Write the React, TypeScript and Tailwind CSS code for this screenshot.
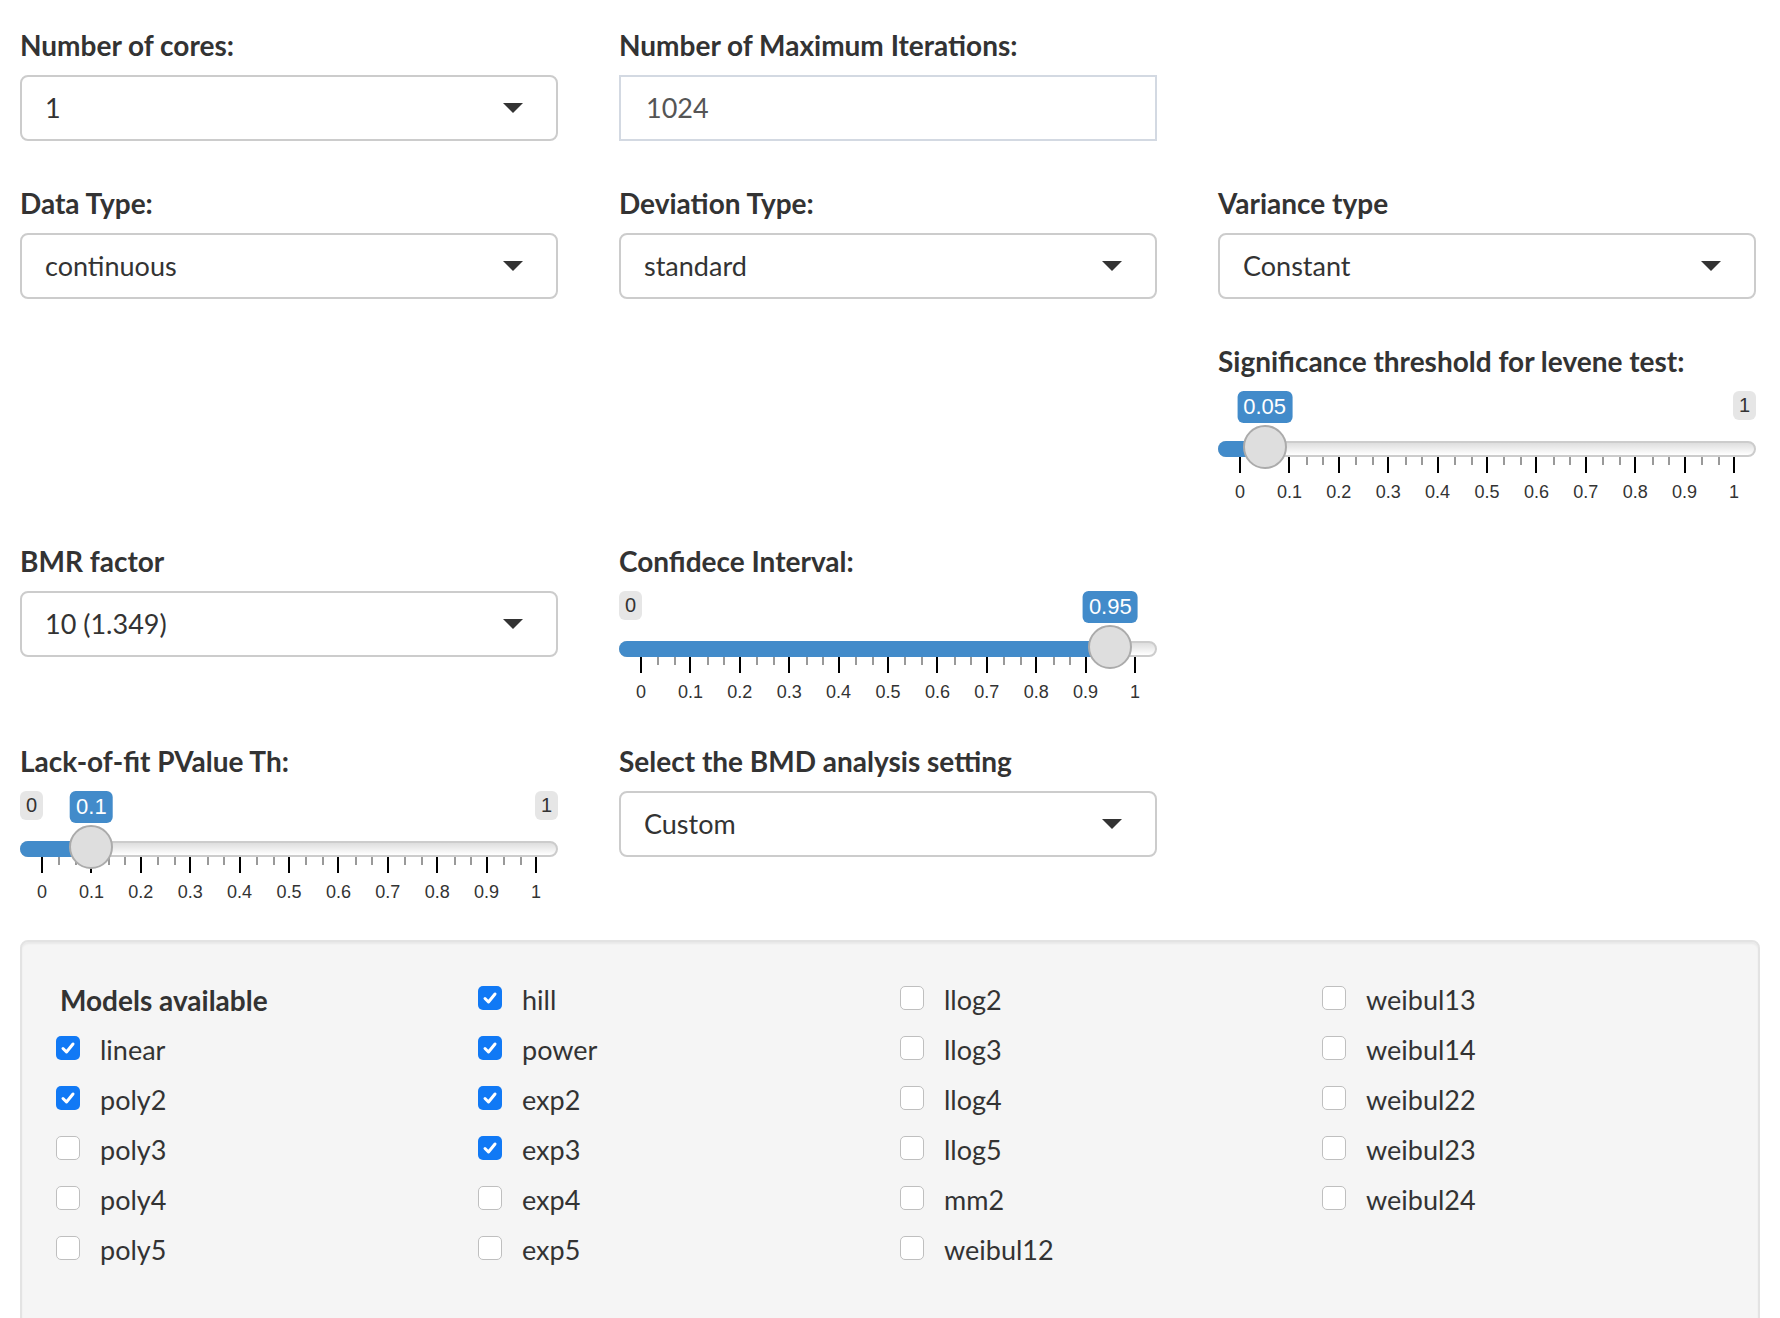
import React from "react";

// Shiny-like settings form: selects, sliders and a checkbox group in a well

const SLIDER_W = 538;
const HANDLE = 44;

function FieldLabel({ text }: { text: string }) {
  return (
    <div className="h-[40px] mb-[10px] text-[28px] leading-[40px] font-bold text-[#333]">
      {text}
    </div>
  );
}

function SelectBox({ value }: { value: string }) {
  return (
    <div className="h-[66px] border-2 border-[#cccccc] rounded-[8px] bg-white flex items-center pl-[23px] pr-[33px]">
      <span className="flex-1 text-[27px] text-[#333]">{value}</span>
      <span className="w-0 h-0 border-l-[10px] border-r-[10px] border-t-[10px] border-l-transparent border-r-transparent border-t-[#333]" />
    </div>
  );
}

function SelectGroup({ label, value }: { label: string; value: string }) {
  return (
    <div className="mb-[42px]">
      <FieldLabel text={label} />
      <SelectBox value={value} />
    </div>
  );
}

function Slider({
  value,
  showMin,
  showMax,
}: {
  value: number;
  showMin: boolean;
  showMax: boolean;
}) {
  const center = HANDLE / 2 + value * (SLIDER_W - HANDLE);
  const majors = Array.from({ length: 11 }, (_, i) => i);
  const minors: number[] = [];
  for (let i = 0; i < 10; i++) {
    minors.push(i * 10 + 10 / 3, i * 10 + 20 / 3);
  }
  const fmt = (i: number) => (i === 0 ? "0" : i === 10 ? "1" : `0.${i}`);

  return (
    <div
      className="relative h-[120px] w-[538px]"
      style={{ fontFamily: '"Liberation Sans", Arial, sans-serif' }}
    >
      {showMin && (
        <span className="absolute left-0 top-0 px-[6px] py-[2px] rounded-[6px] bg-[#e6e6e6] text-[20px] leading-[25px] text-[#333]">
          0
        </span>
      )}
      {showMax && (
        <span className="absolute right-0 top-0 px-[6px] py-[2px] rounded-[6px] bg-[#e6e6e6] text-[20px] leading-[25px] text-[#333]">
          1
        </span>
      )}
      <span
        className="absolute top-0 -translate-x-1/2 px-[6px] py-[2px] rounded-[6px] bg-[#428bca] text-[22px] leading-[28px] text-white"
        style={{ left: center }}
      >
        {String(value)}
      </span>

      {/* track */}
      <div className="absolute left-0 right-0 top-[50px] h-[16px] rounded-full border-2 border-[#cccccc] bg-gradient-to-b from-[#dedede] to-white" />
      <div
        className="absolute left-0 top-[50px] h-[16px] rounded-l-full bg-[#428bca]"
        style={{ width: center }}
      />

      {/* grid */}
      <div className="absolute left-[22px] right-[22px] top-[66px] h-[54px]">
        {minors.map((p) => (
          <span
            key={"m" + p}
            className="absolute top-0 w-[2px] h-[8px] bg-[#999]"
            style={{ left: `${p}%` }}
          />
        ))}
        {majors.map((i) => (
          <React.Fragment key={i}>
            <span
              className="absolute top-0 w-[2px] h-[16px] bg-black -translate-x-1/2"
              style={{ left: `${i * 10}%` }}
            />
            <span
              className="absolute top-[26px] -translate-x-1/2 text-[18px] leading-[18px] text-[#333]"
              style={{ left: `${i * 10}%` }}
            >
              {fmt(i)}
            </span>
          </React.Fragment>
        ))}
      </div>

      {/* handle */}
      <span
        className="absolute top-[34px] w-[44px] h-[44px] -translate-x-1/2 rounded-full border-2 border-[#ababab] bg-[#dedede]"
        style={{ left: center }}
      />
    </div>
  );
}

function SliderGroup(props: {
  label: string;
  value: number;
  showMin: boolean;
  showMax: boolean;
}) {
  return (
    <div className="mb-[30px]">
      <FieldLabel text={props.label} />
      <Slider value={props.value} showMin={props.showMin} showMax={props.showMax} />
    </div>
  );
}

function Check({ label, checked }: { label: string; checked: boolean }) {
  return (
    <div className="h-[50px] flex items-center">
      {checked ? (
        <span className="w-[24px] h-[24px] -mt-[4px] rounded-[5px] bg-[#1179f5] flex items-center justify-center">
          <svg width="18" height="18" viewBox="0 0 18 18">
            <path
              d="M4 9.5l3.5 3.5L14 5"
              fill="none"
              stroke="white"
              strokeWidth="3"
              strokeLinecap="round"
              strokeLinejoin="round"
            />
          </svg>
        </span>
      ) : (
        <span className="w-[24px] h-[24px] -mt-[4px] rounded-[5px] bg-white border border-[#bfbfbf]" />
      )}
      <span className="ml-[20px] text-[27px] text-[#333]">{label}</span>
    </div>
  );
}

const columns: { label: string; checked: boolean }[][] = [
  [
    { label: "linear", checked: true },
    { label: "poly2", checked: true },
    { label: "poly3", checked: false },
    { label: "poly4", checked: false },
    { label: "poly5", checked: false },
  ],
  [
    { label: "hill", checked: true },
    { label: "power", checked: true },
    { label: "exp2", checked: true },
    { label: "exp3", checked: true },
    { label: "exp4", checked: false },
    { label: "exp5", checked: false },
  ],
  [
    { label: "llog2", checked: false },
    { label: "llog3", checked: false },
    { label: "llog4", checked: false },
    { label: "llog5", checked: false },
    { label: "mm2", checked: false },
    { label: "weibul12", checked: false },
  ],
  [
    { label: "weibul13", checked: false },
    { label: "weibul14", checked: false },
    { label: "weibul22", checked: false },
    { label: "weibul23", checked: false },
    { label: "weibul24", checked: false },
  ],
];

export default function App() {
  return (
    <div
      className="min-h-screen bg-white pl-[20px] pr-[20px] pt-[25px]"
      style={{ fontFamily: 'Lato, "Noto Sans", sans-serif' }}
    >
      <div className="grid grid-cols-[538px_538px_538px] gap-x-[61px] items-start">
        {/* row 1 */}
        <SelectGroup label="Number of cores:" value="1" />
        <div className="mb-[42px]">
          <FieldLabel text="Number of Maximum Iterations:" />
          <div className="h-[66px] border-2 border-[#d3d9e2] bg-white flex items-center pl-[25px]">
            <span className="text-[27px] text-[#555]">1024</span>
          </div>
        </div>
        <div />

        {/* row 2 */}
        <SelectGroup label="Data Type:" value="continuous" />
        <SelectGroup label="Deviation Type:" value="standard" />
        <div>
          <SelectGroup label="Variance type" value="Constant" />
          <SliderGroup
            label="Significance threshold for levene test:"
            value={0.05}
            showMin={false}
            showMax={true}
          />
        </div>

        {/* row 3 */}
        <SelectGroup label="BMR factor" value="10 (1.349)" />
        <SliderGroup label="Confidece Interval:" value={0.95} showMin={true} showMax={false} />
        <div />

        {/* row 4 */}
        <SliderGroup label="Lack-of-fit PValue Th:" value={0.1} showMin={true} showMax={true} />
        <SelectGroup label="Select the BMD analysis setting" value="Custom" />
        <div />
      </div>

      <div className="-mt-[1px] w-[1740px] rounded-[8px] border-2 border-[#e3e3e3] bg-[#f5f5f5] shadow-[inset_0_2px_2px_rgba(0,0,0,0.05)] pl-[34px] pt-[33px] pb-[80px]">
        <div className="grid grid-cols-[422px_422px_422px_422px]">
          {columns.map((col, ci) => (
            <div key={ci}>
              {ci === 0 && (
                <div className="h-[50px] flex items-center pl-[4px] text-[28px] font-bold text-[#333]">
                  Models available
                </div>
              )}
              {col.map((c) => (
                <Check key={c.label} label={c.label} checked={c.checked} />
              ))}
            </div>
          ))}
        </div>
      </div>
    </div>
  );
}
